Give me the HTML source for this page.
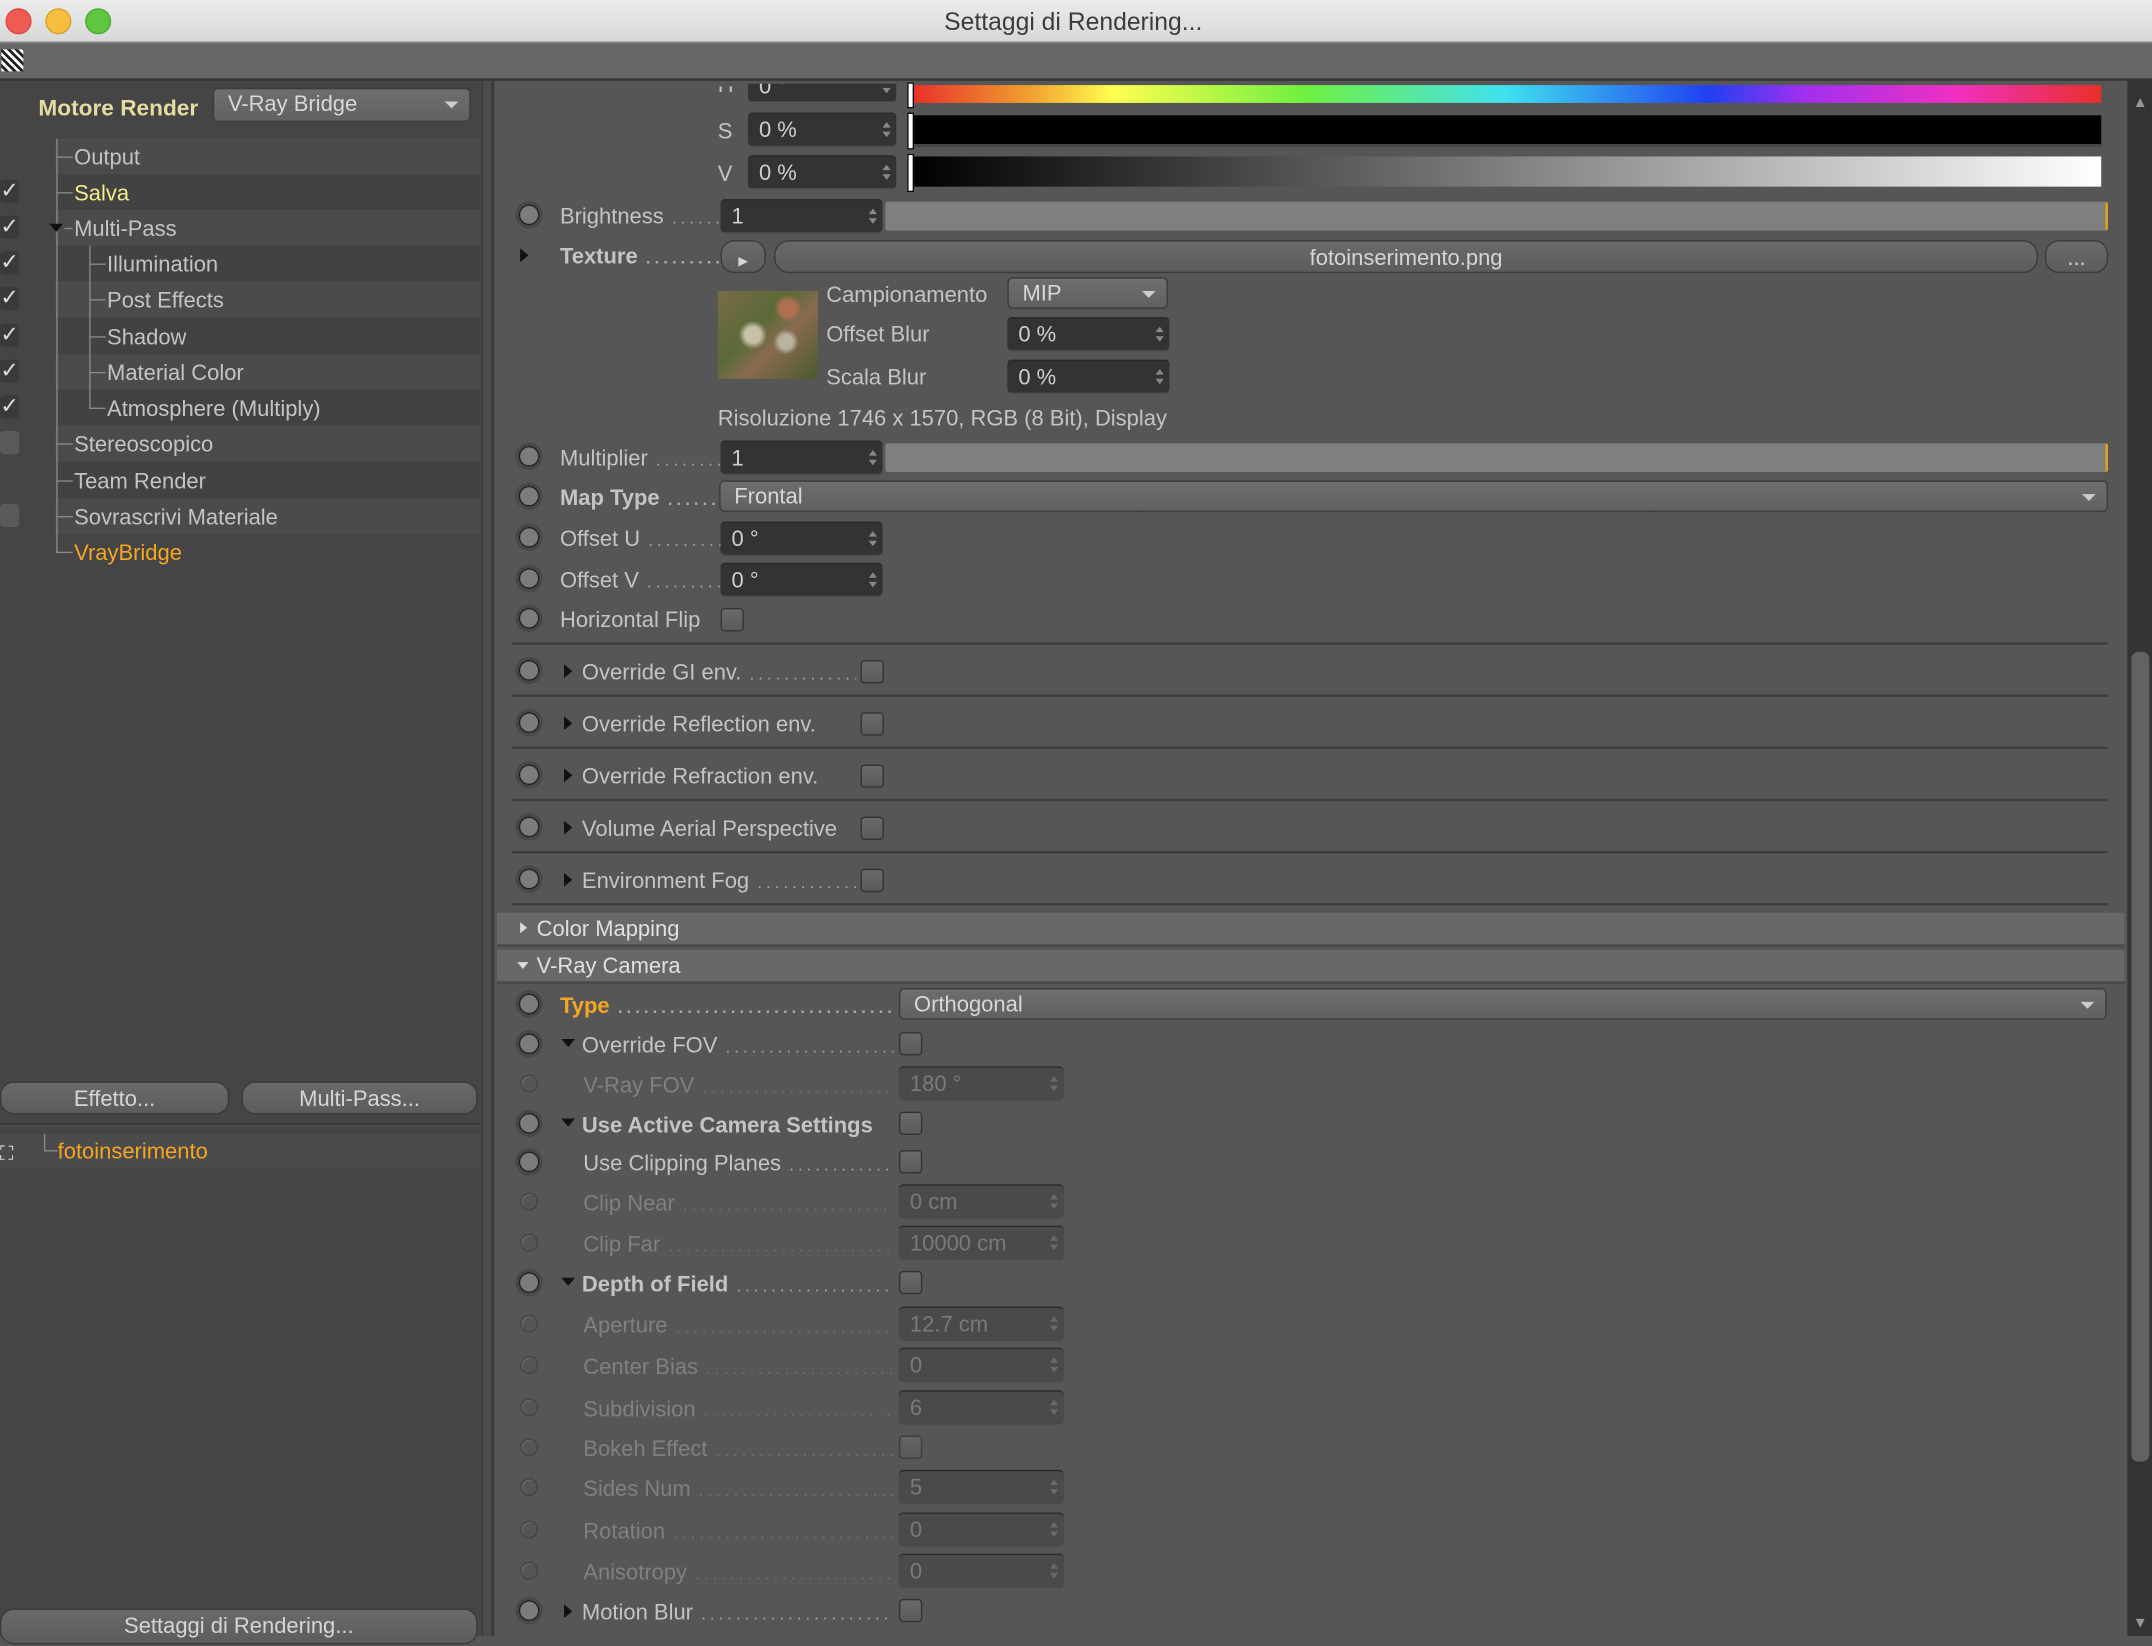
<!DOCTYPE html>
<html><head><meta charset="utf-8"><style>
html,body{margin:0;padding:0;width:2152px;height:1636px;overflow:hidden;background:#565656}
#s{position:absolute;left:0;top:0;width:1568px;height:1192px;transform:scale(1.37245);transform-origin:0 0;font-family:"Liberation Sans",sans-serif;color:#c4c4c4;font-size:16px}
.a{position:absolute}
.t{position:absolute;white-space:nowrap;line-height:22px;margin-top:2px}
.r{position:absolute;left:378px;width:13px;height:13px;border:1.5px solid #222;border-radius:50%;background:#7c7c7c;box-shadow:0 0 0 2.5px #484848}
.rd{position:absolute;left:379px;width:11px;height:11px;border:1px solid #444;border-radius:50%;background:#555;box-shadow:1px 1px 0 #666 inset}
.f{position:absolute;background:#333;border-radius:3px;box-shadow:0 1px 0 #4a4a4a,0 -1px 0 #2a2a2a;height:23px;line-height:25px;padding-left:8px;box-sizing:border-box;color:#d0d0d0;white-space:nowrap}
.f:after{content:"";position:absolute;right:4px;top:6px;border-left:3px solid transparent;border-right:3px solid transparent;border-bottom:4px solid #888}
.f:before{content:"";position:absolute;right:4px;top:13px;border-left:3px solid transparent;border-right:3px solid transparent;border-top:4px solid #888}
.fd{color:#7a7a7a;background:#4a4a4a}
.fd:after{border-bottom-color:#6a6a6a}.fd:before{border-top-color:#6a6a6a}
.cb{position:absolute;width:15px;height:15px;background:linear-gradient(#6a6a6a,#5a5a5a);border:1px solid #333;border-radius:3px}
.dd{position:absolute;background:linear-gradient(#6e6e6e,#616161);border-radius:4px;border:1px solid #3c3c3c;height:23px;line-height:24px;box-sizing:border-box;padding-left:10px;color:#d8d8d8;white-space:nowrap}
.dd:after{content:"";position:absolute;right:8px;top:9px;border-left:5px solid transparent;border-right:5px solid transparent;border-top:5px solid #ccc}
.lab{position:absolute;display:flex;white-space:nowrap;overflow:hidden;line-height:22px;margin-top:2px}
.lab .d{flex:1;overflow:hidden;letter-spacing:3px;margin-left:6px;color:#aaa;font-size:12px}
.dis{color:#808080}.dis .d{color:#707070}
.sep{position:absolute;left:373px;width:1163px;height:2px;background:#3e3e3e;border-bottom:1px solid #5e5e5e}
.tri{position:absolute;width:0;height:0;border-top:5px solid transparent;border-bottom:5px solid transparent;border-left:6px solid #111}
.trd{position:absolute;width:0;height:0;border-left:5px solid transparent;border-right:5px solid transparent;border-top:6px solid #111}
.row{position:absolute;left:40px;width:310px;height:26px}
.ck{position:absolute;left:0;width:14px;height:17px;background:#3a3a3a;border-radius:3px;color:#ddd;font-size:16px;line-height:17px;text-align:center}
.btn{position:absolute;height:24px;line-height:26px;text-align:center;background:linear-gradient(#6a6a6a,#5c5c5c);border:1px solid #3a3a3a;border-radius:10px;color:#d6d6d6;box-sizing:border-box}
.tl{position:absolute;background:#8a8a8a}
</style></head><body><div id="s">
<div class="a" style="left:0;top:0;width:1568px;height:30px;background:linear-gradient(#ececec,#d8d8d8);border-bottom:1px solid #b0b0b0"></div>
<div class="a" style="left:4px;top:6px;width:17px;height:17px;border-radius:50%;background:#ee5b53;border:1px solid #d44"></div>
<div class="a" style="left:33px;top:6px;width:17px;height:17px;border-radius:50%;background:#f6bd3e;border:1px solid #d9a02e"></div>
<div class="a" style="left:62px;top:6px;width:17px;height:17px;border-radius:50%;background:#5fc640;border:1px solid #49a932"></div>
<div class="t" style="left:0;width:1564px;text-align:center;top:3px;color:#3c3c3c;font-size:18px">Settaggi di Rendering...</div>
<div class="a" style="left:0;top:31px;width:1568px;height:26px;background:#676767;border-bottom:2px solid #393939"></div>
<div class="a" style="left:1px;top:36px;width:16px;height:16px;background:repeating-linear-gradient(45deg,#fff 0 2px,#222 2px 4px)"></div>
<div class="a" style="left:0;top:59px;width:351px;height:1133px;background:#454545"></div>
<div class="a" style="left:351px;top:59px;width:9px;height:1133px;background:#4c4c4c;border-left:1px solid #3a3a3a;border-right:2px solid #3a3a3a;box-sizing:border-box"></div>
<div class="t" style="left:28px;top:66px;font-weight:bold;color:#e4dca0;font-size:16.5px">Motore Render</div>
<div class="dd" style="left:155px;top:64px;width:188px;height:25px">V-Ray Bridge</div>
<div class="row" style="top:101px;background:#4b4b4b"></div>
<div class="row" style="top:127px;background:#424242"></div>
<div class="row" style="top:153px;background:#4b4b4b"></div>
<div class="row" style="top:179px;background:#424242"></div>
<div class="row" style="top:205px;background:#4b4b4b"></div>
<div class="row" style="top:232px;background:#424242"></div>
<div class="row" style="top:258px;background:#4b4b4b"></div>
<div class="row" style="top:284px;background:#424242"></div>
<div class="row" style="top:310px;background:#4b4b4b"></div>
<div class="row" style="top:337px;background:#424242"></div>
<div class="row" style="top:363px;background:#4b4b4b"></div>
<div class="tl" style="left:41px;top:101px;width:1px;height:302px"></div>
<div class="tl" style="left:65px;top:179px;width:1px;height:119px"></div>
<div class="tl" style="left:41px;top:114px;width:12px;height:1px"></div>
<div class="tl" style="left:41px;top:140px;width:12px;height:1px"></div>
<div class="tl" style="left:47px;top:166px;width:6px;height:1px"></div>
<div class="trd" style="left:36px;top:163px"></div>
<div class="tl" style="left:65px;top:192px;width:12px;height:1px"></div>
<div class="tl" style="left:65px;top:218px;width:12px;height:1px"></div>
<div class="tl" style="left:65px;top:245px;width:12px;height:1px"></div>
<div class="tl" style="left:65px;top:271px;width:12px;height:1px"></div>
<div class="tl" style="left:65px;top:297px;width:12px;height:1px"></div>
<div class="tl" style="left:41px;top:323px;width:12px;height:1px"></div>
<div class="tl" style="left:41px;top:350px;width:12px;height:1px"></div>
<div class="tl" style="left:41px;top:376px;width:12px;height:1px"></div>
<div class="tl" style="left:41px;top:402px;width:12px;height:1px"></div>
<div class="t" style="left:54px;top:103px">Output</div>
<div class="t" style="left:54px;top:129px;color:#f4ec8a">Salva</div>
<div class="t" style="left:54px;top:155px">Multi-Pass</div>
<div class="t" style="left:78px;top:181px">Illumination</div>
<div class="t" style="left:78px;top:207px">Post Effects</div>
<div class="t" style="left:78px;top:234px">Shadow</div>
<div class="t" style="left:78px;top:260px">Material Color</div>
<div class="t" style="left:78px;top:286px">Atmosphere (Multiply)</div>
<div class="t" style="left:54px;top:312px">Stereoscopico</div>
<div class="t" style="left:54px;top:339px">Team Render</div>
<div class="t" style="left:54px;top:365px">Sovrascrivi Materiale</div>
<div class="t" style="left:54px;top:391px;color:#f5a623">VrayBridge</div>
<div class="ck" style="top:131px">✓</div><div class="ck" style="top:157px">✓</div><div class="ck" style="top:183px">✓</div><div class="ck" style="top:209px">✓</div><div class="ck" style="top:236px">✓</div><div class="ck" style="top:262px">✓</div><div class="ck" style="top:288px">✓</div>
<div class="ck" style="top:314px;background:#5a5a5a"></div><div class="ck" style="top:367px;background:#5a5a5a"></div>
<div class="btn" style="left:0;top:788px;width:167px">Effetto...</div>
<div class="btn" style="left:176px;top:788px;width:172px">Multi-Pass...</div>
<div class="a" style="left:0;top:818px;width:350px;height:2px;background:#3a3a3a;border-bottom:1px solid #555"></div>
<div class="a" style="left:0;top:826px;width:350px;height:25px;background:#4b4b4b"></div>
<div class="t" style="left:0;top:827px;color:#ddd;font-size:14px">⛶</div>
<div class="tl" style="left:32px;top:826px;width:1px;height:12px"></div>
<div class="tl" style="left:32px;top:838px;width:10px;height:1px"></div>
<div class="t" style="left:42px;top:827px;color:#f5a623">fotoinserimento</div>
<div class="btn" style="left:0;top:1172px;width:348px;height:26px">Settaggi di Rendering...</div>
<div class="a" style="left:362px;top:61px;width:1186px;height:1131px;background:#565656"></div>
<div class="a" style="left:1550px;top:59px;width:18px;height:1133px;background:#343434"></div>
<div class="a" style="left:1553px;top:475px;width:13px;height:590px;background:#626262;border-radius:5px"></div>
<div class="t" style="left:1554px;top:62px;font-size:11px;color:#999">▲</div>
<div class="t" style="left:1554px;top:1170px;font-size:11px;color:#999">▼</div>
<div class="t" style="left:523px;top:50px;clip-path:inset(11px 0 0 0)">H</div>
<div class="f" style="left:545px;top:51px;width:108px;clip-path:inset(10px 0 0 0)">0 °</div>
<div class="a" style="left:664px;top:62px;width:867px;height:13px;background:linear-gradient(90deg,#e8302a,#f0a030 10%,#ffff50 17%,#70f040 33%,#40e0f0 50%,#2040f0 67%,#a030f0 75%,#f030c0 88%,#e83028)"></div>
<div class="a" style="left:661px;top:60px;width:3px;height:17px;background:#fff;border:1px solid #000"></div>
<div class="t" style="left:523px;top:84px">S</div>
<div class="f" style="left:545px;top:83px;width:108px">0 %</div>
<div class="a" style="left:664px;top:84px;width:867px;height:21px;background:#000;border-bottom:2px solid #4a4a4a"></div>
<div class="a" style="left:661px;top:82px;width:3px;height:25px;background:#fff;border:1px solid #000"></div>
<div class="t" style="left:523px;top:115px">V</div>
<div class="f" style="left:545px;top:114px;width:108px">0 %</div>
<div class="a" style="left:664px;top:114px;width:867px;height:22px;background:linear-gradient(90deg,#000,#fff)"></div>
<div class="a" style="left:661px;top:112px;width:3px;height:26px;background:#fff;border:1px solid #000"></div>
<div class="r" style="top:149px"></div>
<div class="lab" style="left:408px;top:146px;width:117px"><span>Brightness</span><span class="d">..........</span></div>
<div class="f" style="left:525px;top:146px;width:118px">1</div>
<div class="a" style="left:645px;top:147px;width:889px;height:21px;background:#7f7f7f;border-radius:2px;border-right:2px solid #e0a020"></div>
<div class="tri" style="left:379px;top:181px"></div>
<div class="lab" style="left:408px;top:175px;width:117px;font-weight:bold"><span>Texture</span><span class="d">..........</span></div>
<div class="btn" style="left:525px;top:175px;width:33px;height:24px"><span style="font-size:9px">▶</span></div>
<div class="btn" style="left:564px;top:175px;width:921px;height:24px;border-radius:11px">fotoinserimento.png</div>
<div class="btn" style="left:1490px;top:175px;width:46px;height:24px">...</div>
<div class="a" style="left:523px;top:212px;width:73px;height:64px;background:radial-gradient(circle at 35% 50%,#c8c0a8 0 10%,transparent 18%),radial-gradient(circle at 68% 58%,#b8b4a0 0 8%,transparent 15%),radial-gradient(circle at 70% 20%,#b07050 0 8%,transparent 14%),linear-gradient(135deg,#7a6a48,#5a6a38 40%,#8a6a50 60%,#4a5a30)"></div>
<div class="t" style="left:602px;top:203px">Campionamento</div>
<div class="dd" style="left:734px;top:202px;width:117px">MIP</div>
<div class="t" style="left:602px;top:232px">Offset Blur</div>
<div class="f" style="left:734px;top:232px;width:118px">0 %</div>
<div class="t" style="left:602px;top:263px">Scala Blur</div>
<div class="f" style="left:734px;top:263px;width:118px">0 %</div>
<div class="t" style="left:523px;top:293px">Risoluzione 1746 x 1570, RGB (8 Bit), Display</div>
<div class="r" style="top:325px"></div>
<div class="lab" style="left:408px;top:322px;width:117px"><span>Multiplier</span><span class="d">..........</span></div>
<div class="f" style="left:525px;top:322px;width:118px">1</div>
<div class="a" style="left:645px;top:323px;width:889px;height:21px;background:#7f7f7f;border-radius:2px;border-right:2px solid #e0a020"></div>
<div class="r" style="top:354px"></div>
<div class="lab" style="left:408px;top:351px;width:117px;font-weight:bold"><span>Map Type</span><span class="d">..........</span></div>
<div class="dd" style="left:524px;top:350px;width:1012px">Frontal</div>
<div class="r" style="top:384px"></div>
<div class="lab" style="left:408px;top:381px;width:117px"><span>Offset U</span><span class="d">..........</span></div>
<div class="f" style="left:525px;top:381px;width:118px">0 °</div>
<div class="r" style="top:414px"></div>
<div class="lab" style="left:408px;top:411px;width:117px"><span>Offset V</span><span class="d">..........</span></div>
<div class="f" style="left:525px;top:411px;width:118px">0 °</div>
<div class="r" style="top:443px"></div>
<div class="t" style="left:408px;top:440px">Horizontal Flip</div>
<div class="cb" style="left:525px;top:443px"></div>
<div class="sep" style="top:468px"></div>
<div class="r" style="top:481px"></div><div class="tri" style="left:411px;top:484px"></div>
<div class="lab" style="left:424px;top:478px;width:200px"><span>Override GI env.</span><span class="d">..............</span></div><div class="cb" style="left:627px;top:481px"></div>
<div class="sep" style="top:506px"></div>
<div class="r" style="top:519px"></div><div class="tri" style="left:411px;top:522px"></div>
<div class="t" style="left:424px;top:516px">Override Reflection env.</div><div class="cb" style="left:627px;top:519px"></div>
<div class="sep" style="top:544px"></div>
<div class="r" style="top:557px"></div><div class="tri" style="left:411px;top:560px"></div>
<div class="t" style="left:424px;top:554px">Override Refraction env.</div><div class="cb" style="left:627px;top:557px"></div>
<div class="sep" style="top:582px"></div>
<div class="r" style="top:595px"></div><div class="tri" style="left:411px;top:598px"></div>
<div class="t" style="left:424px;top:592px">Volume Aerial Perspective</div><div class="cb" style="left:627px;top:595px"></div>
<div class="sep" style="top:620px"></div>
<div class="r" style="top:633px"></div><div class="tri" style="left:411px;top:636px"></div>
<div class="lab" style="left:424px;top:630px;width:200px"><span>Environment Fog</span><span class="d">..............</span></div><div class="cb" style="left:627px;top:633px"></div>
<div class="sep" style="top:658px"></div>
<div class="a" style="left:362px;top:665px;width:1186px;height:23px;background:#686868;border-bottom:2px solid #4a4a4a"></div>
<div class="tri" style="left:379px;top:672px;border-left-color:#ddd;border-top-width:4px;border-bottom-width:4px;border-left-width:5px"></div>
<div class="t" style="left:391px;top:665px;color:#e0e0e0">Color Mapping</div>
<div class="a" style="left:362px;top:692px;width:1186px;height:23px;background:#686868;border-bottom:2px solid #4a4a4a"></div>
<div class="trd" style="left:377px;top:701px;border-top-color:#ddd;border-left-width:4px;border-right-width:4px;border-top-width:5px"></div>
<div class="t" style="left:391px;top:692px;color:#e0e0e0">V-Ray Camera</div>
<div class="r" style="top:724px"></div>
<div class="lab" style="left:408px;top:721px;width:243px;font-weight:bold;color:#f5a623"><span>Type</span><span class="d">..............................................</span></div>
<div class="dd" style="left:655px;top:720px;width:880px">Orthogonal</div>
<div class="r" style="top:753px"></div><div class="trd" style="left:409px;top:757px"></div>
<div class="lab" style="left:424px;top:750px;width:227px"><span>Override FOV</span><span class="d">..............................................</span></div><div class="cb" style="left:655px;top:752px"></div>
<div class="rd" style="top:783px"></div>
<div class="lab dis" style="left:425px;top:779px;width:226px"><span>V-Ray FOV</span><span class="d">..............................................</span></div><div class="f fd" style="left:655px;top:778px;width:120px">180 °</div>
<div class="r" style="top:811px"></div><div class="trd" style="left:409px;top:815px"></div>
<div class="t" style="left:424px;top:808px;font-weight:bold">Use Active Camera Settings</div><div class="cb" style="left:655px;top:810px"></div>
<div class="r" style="top:839px"></div>
<div class="lab" style="left:425px;top:836px;width:226px"><span>Use Clipping Planes</span><span class="d">..............................................</span></div><div class="cb" style="left:655px;top:838px"></div>
<div class="rd" style="top:869px"></div>
<div class="lab dis" style="left:425px;top:865px;width:226px"><span>Clip Near</span><span class="d">..............................................</span></div><div class="f fd" style="left:655px;top:864px;width:120px">0 cm</div>
<div class="rd" style="top:899px"></div>
<div class="lab dis" style="left:425px;top:895px;width:226px"><span>Clip Far</span><span class="d">..............................................</span></div><div class="f fd" style="left:655px;top:894px;width:120px">10000 cm</div>
<div class="r" style="top:927px"></div><div class="trd" style="left:409px;top:931px"></div>
<div class="lab" style="left:424px;top:924px;width:227px;font-weight:bold"><span>Depth of Field</span><span class="d" style="font-weight:normal">..............................................</span></div><div class="cb" style="left:655px;top:926px"></div>
<div class="rd" style="top:958px"></div>
<div class="lab dis" style="left:425px;top:954px;width:226px"><span>Aperture</span><span class="d">..............................................</span></div><div class="f fd" style="left:655px;top:953px;width:120px">12.7 cm</div>
<div class="rd" style="top:988px"></div>
<div class="lab dis" style="left:425px;top:984px;width:226px"><span>Center Bias</span><span class="d">..............................................</span></div><div class="f fd" style="left:655px;top:983px;width:120px">0</div>
<div class="rd" style="top:1019px"></div>
<div class="lab dis" style="left:425px;top:1015px;width:226px"><span>Subdivision</span><span class="d">..............................................</span></div><div class="f fd" style="left:655px;top:1014px;width:120px">6</div>
<div class="rd" style="top:1048px"></div>
<div class="lab dis" style="left:425px;top:1044px;width:226px"><span>Bokeh Effect</span><span class="d">..............................................</span></div><div class="cb" style="left:655px;top:1046px;opacity:.7"></div>
<div class="rd" style="top:1077px"></div>
<div class="lab dis" style="left:425px;top:1073px;width:226px"><span>Sides Num</span><span class="d">..............................................</span></div><div class="f fd" style="left:655px;top:1072px;width:120px">5</div>
<div class="rd" style="top:1108px"></div>
<div class="lab dis" style="left:425px;top:1104px;width:226px"><span>Rotation</span><span class="d">..............................................</span></div><div class="f fd" style="left:655px;top:1103px;width:120px">0</div>
<div class="rd" style="top:1138px"></div>
<div class="lab dis" style="left:425px;top:1134px;width:226px"><span>Anisotropy</span><span class="d">..............................................</span></div><div class="f fd" style="left:655px;top:1133px;width:120px">0</div>
<div class="r" style="top:1166px"></div><div class="tri" style="left:411px;top:1169px"></div>
<div class="lab" style="left:424px;top:1163px;width:227px"><span>Motion Blur</span><span class="d">..............................................</span></div><div class="cb" style="left:655px;top:1165px"></div>
</div></body></html>
